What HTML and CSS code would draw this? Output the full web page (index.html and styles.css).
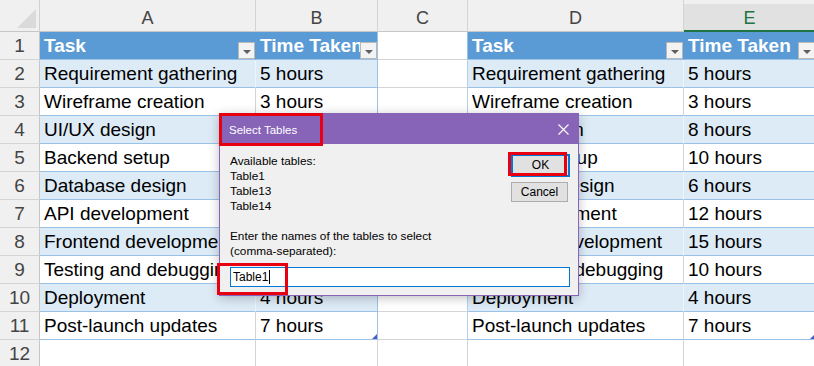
FILE: index.html
```html
<!DOCTYPE html>
<html>
<head>
<meta charset="utf-8">
<title>Select Tables</title>
<link rel="stylesheet" href="styles.css">
</head>
<body>
<div class="sheet">
    <!-- column headers -->
    <div class="corner"><svg width="20" height="20" viewBox="0 0 20 20"><polygon points="19,0 19,19 0,19" fill="#dadada"/></svg></div>
    <div class="colhd">A</div>
    <div class="colhd">B</div>
    <div class="colhd">C</div>
    <div class="colhd">D</div>
    <div class="colhd sel">E</div>

    <!-- 1 -->
    <div class="rowhd">1</div>
    <div class="cell th">Task<span class="filter"></span></div>
    <div class="cell th edge">Time Taken<span class="filter"></span></div>
    <div class="cell gap top"></div>
    <div class="cell th">Task<span class="filter"></span></div>
    <div class="cell th">Time Taken<span class="filter"></span></div>

    <!-- 2 -->
    <div class="rowhd">2</div>
    <div class="cell band">Requirement gathering</div>
    <div class="cell band edge">5 hours</div>
    <div class="cell gap"></div>
    <div class="cell band">Requirement gathering</div>
    <div class="cell band">5 hours</div>

    <!-- 3 -->
    <div class="rowhd">3</div>
    <div class="cell tr">Wireframe creation</div>
    <div class="cell tr edge">3 hours</div>
    <div class="cell gap"></div>
    <div class="cell tr">Wireframe creation</div>
    <div class="cell tr">3 hours</div>

    <!-- 4 -->
    <div class="rowhd">4</div>
    <div class="cell band">UI/UX design</div>
    <div class="cell band edge">8 hours</div>
    <div class="cell gap"></div>
    <div class="cell band">UI/UX design</div>
    <div class="cell band">8 hours</div>

    <!-- 5 -->
    <div class="rowhd">5</div>
    <div class="cell tr">Backend setup</div>
    <div class="cell tr edge">10 hours</div>
    <div class="cell gap"></div>
    <div class="cell tr">Backend setup</div>
    <div class="cell tr">10 hours</div>

    <!-- 6 -->
    <div class="rowhd">6</div>
    <div class="cell band">Database design</div>
    <div class="cell band edge">6 hours</div>
    <div class="cell gap"></div>
    <div class="cell band">Database design</div>
    <div class="cell band">6 hours</div>

    <!-- 7 -->
    <div class="rowhd">7</div>
    <div class="cell tr">API development</div>
    <div class="cell tr edge">12 hours</div>
    <div class="cell gap"></div>
    <div class="cell tr">API development</div>
    <div class="cell tr">12 hours</div>

    <!-- 8 -->
    <div class="rowhd">8</div>
    <div class="cell band">Frontend development</div>
    <div class="cell band edge">15 hours</div>
    <div class="cell gap"></div>
    <div class="cell band">Frontend development</div>
    <div class="cell band">15 hours</div>

    <!-- 9 -->
    <div class="rowhd">9</div>
    <div class="cell tr">Testing and debugging</div>
    <div class="cell tr edge">10 hours</div>
    <div class="cell gap"></div>
    <div class="cell tr">Testing and debugging</div>
    <div class="cell tr">10 hours</div>

    <!-- 10 -->
    <div class="rowhd">10</div>
    <div class="cell band">Deployment</div>
    <div class="cell band edge">4 hours</div>
    <div class="cell gap"></div>
    <div class="cell band">Deployment</div>
    <div class="cell band">4 hours</div>

    <!-- 11 -->
    <div class="rowhd">11</div>
    <div class="cell tr">Post-launch updates</div>
    <div class="cell tr edge">7 hours<span class="grip"></span></div>
    <div class="cell gap"></div>
    <div class="cell tr">Post-launch updates</div>
    <div class="cell tr">7 hours<span class="grip"></span></div>

    <!-- 12 -->
    <div class="rowhd">12</div>
    <div class="cell"></div>
    <div class="cell"></div>
    <div class="cell"></div>
    <div class="cell"></div>
    <div class="cell"></div>
</div>

<div class="dialog">
    <div class="dlg-title">
        <span>Select Tables</span>
        <svg class="dlg-close" width="11" height="11" viewBox="0 0 11 11"><path d="M0.5 0.5 L10.5 10.5 M10.5 0.5 L0.5 10.5" stroke="#fff" stroke-width="1.1" fill="none"/></svg>
    </div>
    <div class="dlg-body">
        <div class="dlg-main">
            <div class="prompt">Available tables:<br>Table1<br>Table13<br>Table14<br><br>Enter the names of the tables to select<br>(comma-separated):</div>
            <div class="dlg-buttons">
                <div class="btn default">OK</div>
                <div class="btn">Cancel</div>
            </div>
        </div>
        <div class="dlg-input"><span class="caret">Table1</span></div>
    </div>
</div>

<!-- red callout boxes -->
<div class="mark mark-title"></div>
<div class="mark mark-ok"></div>
<div class="mark mark-input"></div>
</body>
</html>
```

FILE: styles.css
```css
body{
	margin:0;
	overflow:hidden;
	background:#fff;
	font-family:"Liberation Sans", Arial, sans-serif;
}

/* 表格区域 */
.sheet{
	display:grid;
	grid-template-columns:40px 216px 122px 90px 216px 132px;
	grid-template-rows:32px repeat(12, 28px);
	width:816px;
}
.sheet > div{
	box-sizing:border-box;
	border-right:1px solid #d4d4d4;
	border-bottom:1px solid #d4d4d4;
	white-space:nowrap;
	overflow:hidden;
	position:relative;
}

.corner{
	background:#f0f0f0;
	border-bottom-color:#c6c6c6 !important;
	border-right-color:#d0d0d0 !important;
	padding:9px 0 0 17px;
}
.corner svg{ display:block; }

.colhd{
	background:#f0f0f0;
	color:#444;
	font-size:18px;
	text-align:center;
	padding-top:6px;
	line-height:24px;
	border-bottom-color:#c6c6c6 !important;
}
.colhd.sel{
	background:#e1e1e1;
	color:#217346;
	border-top:4px solid #f0f0f0;
	padding-top:2px;
	border-bottom:2px solid #217346 !important;
}

.rowhd{
	background:#f0f0f0;
	color:#444;
	font-size:19px;
	text-align:center;
	line-height:27px;
	border-right-color:#c6c6c6 !important;
}

.cell{
	font-size:19px;
	line-height:27px;
	padding-left:4px;
	color:#000;
}

/* 表格样式 */
.cell.th{
	background:#5b9bd5;
	color:#fff;
	font-weight:bold;
	border-right-color:#5b9bd5;
	border-bottom-color:#9bc2e6;
}
.cell.band{
	background:#ddebf7;
	border-right-color:#edf4fb;
	border-bottom-color:#9bc2e6;
}
.cell.tr{
	border-bottom-color:#9bc2e6;
}
.cell.edge{ border-right-color:#9bc2e6; }
.cell.gap{ border-right-color:#b4cfe9; }
.cell.gap.top{ border-right-color:#9bc2e6; }

.filter{
	position:absolute;
	right:0;
	bottom:0;
	width:15px;
	height:15px;
	background:#f3f3f3;
	border:1px solid #b8b8b8;
}
.filter:after{
	content:"";
	position:absolute;
	left:4px;
	top:7px;
	border-left:4px solid transparent;
	border-right:4px solid transparent;
	border-top:4px solid #5f5f5f;
}

.grip{
	position:absolute;
	right:0;
	bottom:0;
	width:0;
	height:0;
	border-left:5px solid transparent;
	border-bottom:5px solid #4a5cbf;
}

/* 对话框 */
.dialog{
	position:absolute;
	left:219px;
	top:113px;
	width:360px;
	height:183px;
	box-sizing:border-box;
	border:1px solid #8764b8;
	background:#f0f0f0;
	box-shadow:0 2px 10px rgba(0,0,0,0.25);
	font-size:12px;
	color:#000;
}
.dlg-title{
	height:30px;
	background:#8764b8;
	color:#fff;
	font-size:11.5px;
	display:flex;
	align-items:center;
	justify-content:space-between;
	padding:1px 9px 0 9px;
	box-sizing:border-box;
}
.dlg-close{ display:block; }

.dlg-body{
	padding:10px 8px 0 10px;
}
.dlg-main{
	display:flex;
	justify-content:space-between;
}
.prompt{
	line-height:15px;
	font-size:11.8px;
}
.dlg-buttons{
	display:flex;
	flex-direction:column;
	align-items:flex-start;
	gap:5px;
}
.btn{
	box-sizing:border-box;
	width:57px;
	height:20px;
	background:#e1e1e1;
	border:1px solid #adadad;
	text-align:center;
	line-height:18px;
	font-size:12px;
}
.btn.default{
	width:59px;
	height:23px;
	border:2px solid #0078d7;
	line-height:19px;
}

.dlg-input{
	margin-top:8px;
	box-sizing:border-box;
	height:20px;
	background:#fff;
	border:1px solid #0078d7;
	padding-left:2px;
	line-height:18px;
	font-size:12px;
}
.caret{
	border-right:1px solid #000;
	padding-right:1px;
}

/* 红色标注框 */
.mark{
	position:absolute;
	box-sizing:border-box;
	border:3px solid #e60012;
}
.mark-title{ left:219px; top:113px; width:104px; height:33px; }
.mark-ok{ left:508px; top:152px; width:59px; height:24px; }
.mark-input{ left:217px; top:263px; width:71px; height:32px; }
```
